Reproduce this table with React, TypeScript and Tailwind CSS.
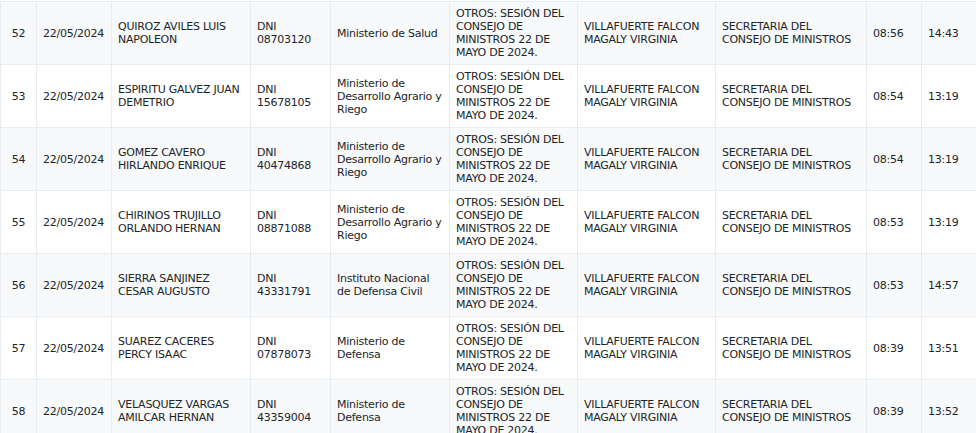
import React from "react";

const ASUNTO = "OTROS: SESIÓN DEL CONSEJO DE MINISTROS 22 DE MAYO DE 2024.";
const FUNC = "VILLAFUERTE FALCON MAGALY VIRGINIA";
const OFICINA = "SECRETARIA DEL CONSEJO DE MINISTROS";

const rows = [
  { n: 52, name: "QUIROZ AVILES LUIS NAPOLEON", dni: "08703120", ent: "Ministerio de Salud", in: "08:56", out: "14:43" },
  { n: 53, name: "ESPIRITU GALVEZ JUAN DEMETRIO", dni: "15678105", ent: "Ministerio de Desarrollo Agrario y Riego", in: "08:54", out: "13:19" },
  { n: 54, name: "GOMEZ CAVERO HIRLANDO ENRIQUE", dni: "40474868", ent: "Ministerio de Desarrollo Agrario y Riego", in: "08:54", out: "13:19" },
  { n: 55, name: "CHIRINOS TRUJILLO ORLANDO HERNAN", dni: "08871088", ent: "Ministerio de Desarrollo Agrario y Riego", in: "08:53", out: "13:19" },
  { n: 56, name: "SIERRA SANJINEZ CESAR AUGUSTO", dni: "43331791", ent: "Instituto Nacional de Defensa Civil", in: "08:53", out: "14:57" },
  { n: 57, name: "SUAREZ CACERES PERCY ISAAC", dni: "07878073", ent: "Ministerio de Defensa", in: "08:39", out: "13:51" },
  { n: 58, name: "VELASQUEZ VARGAS AMILCAR HERNAN", dni: "43359004", ent: "Ministerio de Defensa", in: "08:39", out: "13:52" },
];

const td = "border border-[#e9ecef] px-[6px] py-[5px] align-middle";

export default function App() {
  return (
    <div className="w-[976px] h-[433px] overflow-hidden bg-white pt-[1px]">
      <table
        className="table-fixed border-collapse w-[976px] text-[11px] leading-[13px] tracking-[-0.25px] text-[#212529]"
        style={{ fontFamily: '"DejaVu Sans", Verdana, sans-serif' }}
      >
        <colgroup>
          <col className="w-[36px]" />
          <col className="w-[75px]" />
          <col className="w-[139px]" />
          <col className="w-[80px]" />
          <col className="w-[119px]" />
          <col className="w-[128px]" />
          <col className="w-[138px]" />
          <col className="w-[151px]" />
          <col className="w-[55px]" />
          <col className="w-[55px]" />
        </colgroup>
        <tbody>
          {rows.map((r, i) => (
            <tr key={r.n} className={i % 2 === 0 ? "bg-[#f8f9fa]" : "bg-white"}>
              <td className={`${td} text-center`}>{r.n}</td>
              <td className={td}>22/05/2024</td>
              <td className={td}>{r.name}</td>
              <td className={td}>
                DNI
                <br />
                {r.dni}
              </td>
              <td className={td}>{r.ent}</td>
              <td className={td}>{ASUNTO}</td>
              <td className={td}>{FUNC}</td>
              <td className={td}>{OFICINA}</td>
              <td className={td}>{r.in}</td>
              <td className={td}>{r.out}</td>
            </tr>
          ))}
        </tbody>
      </table>
    </div>
  );
}
